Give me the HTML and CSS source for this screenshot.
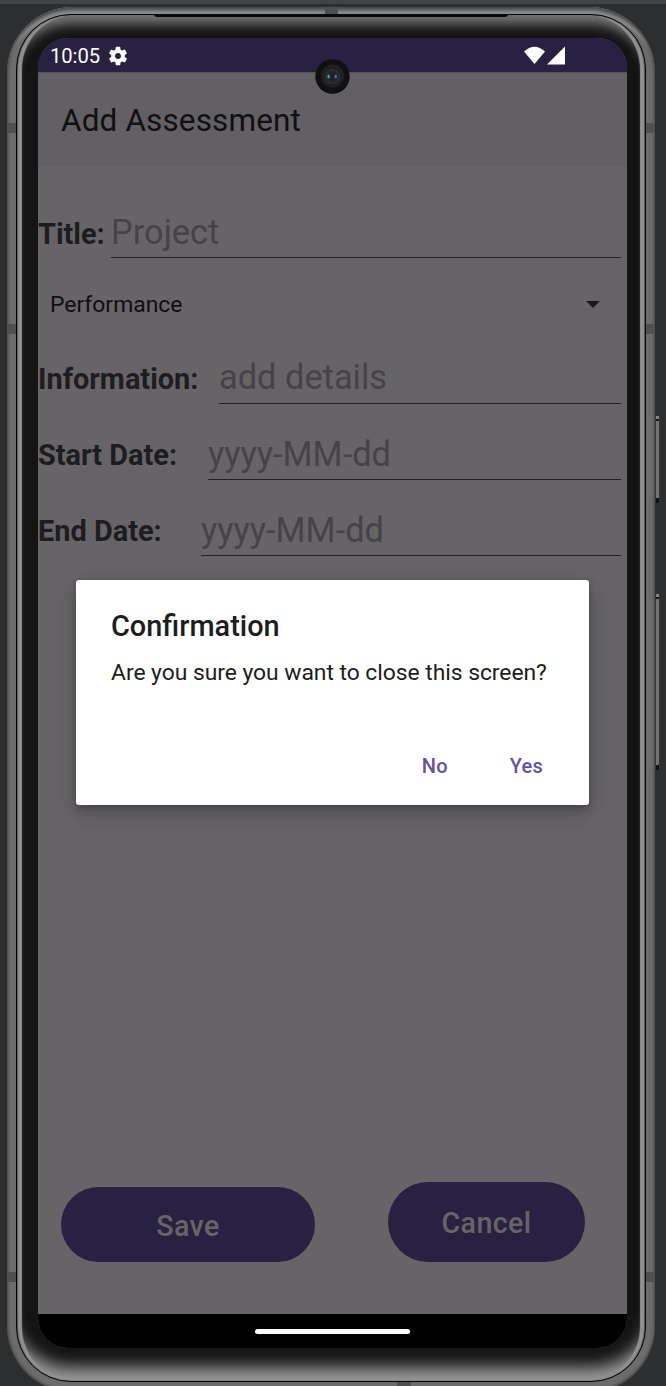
FILE: index.html
```html
<!DOCTYPE html>
<html lang="en">
<head>
<meta charset="utf-8">
<title>Add Assessment</title>
<link rel="stylesheet" href="styles.css">
</head>
<body>
<div class="stage">
  <div class="toolbar-edge"></div>
  <div class="phone">
    <i class="band band-top"></i>
    <i class="band band-l1"></i><i class="band band-l2"></i><i class="band band-l3"></i>
    <i class="band band-r1"></i><i class="band band-r2"></i><i class="band band-r3"></i>
    <i class="band band-bottom"></i>
    <i class="key key-power"></i>
    <i class="key key-volume"></i>
    <div class="rim">
      <i class="speaker"></i>
      <div class="screen">
        <header class="status">
          <span class="clock">10:05</span>
          <svg class="gear" viewBox="0 0 24 24"><path fill="#fff" d="M19.4 13c.04-.3.06-.65.06-1s-.02-.7-.07-1l2.1-1.65c.2-.15.25-.42.13-.64l-2-3.46c-.12-.22-.38-.3-.6-.22l-2.5 1a7.300 7.300 0 0 0-1.700-.98l-.38-2.650A.49.490 0 0 0 14 2h-4a.49.490 0 0 0-.49.420l-.38 2.650c-.6.240-1.170.570-1.690.980l-2.490-1a.5.500 0 0 0-.61.220l-2 3.460c-.13.220-.07.490.12.640L4.600 11c-.05.300-.08.650-.08 1s.03.700.07 1l-2.110 1.650a.5.500 0 0 0-.12.640l2 3.460c.12.220.38.300.6.220l2.500-1c.52.400 1.080.730 1.690.980l.38 2.650c.04.240.24.400.48.400h4c.25 0 .46-.18.490-.42l.38-2.650c.61-.25 1.170-.58 1.690-.98l2.500 1c.23.090.49 0 .61-.22l2-3.460a.5.500 0 0 0-.12-.64zM12 15.200a3.200 3.200 0 1 1 0-6.400 3.200 3.200 0 0 1 0 6.400z"/></svg>
          <svg class="signal" viewBox="0 0 42 18"><path fill="#fff" d="M0 5Q10.500-4.600 21 5L10.500 17.500z"/><path fill="#fff" d="M41 0v18H23z"/></svg>
        </header>
        <div class="appbar"><h1>Add Assessment</h1></div>
        <main class="content">
          <div class="row row-title"><span class="label">Title:</span><span class="field field-title">Project</span></div>
          <div class="spinner"><span>Performance</span><svg class="caret" viewBox="0 0 14 7"><path fill="#19191b" d="M0 0h14L7 7z"/></svg></div>
          <div class="row"><span class="label">Information:</span><span class="field field-info">add details</span></div>
          <div class="row"><span class="label">Start Date:</span><span class="field field-start">yyyy-MM-dd</span></div>
          <div class="row"><span class="label">End Date:</span><span class="field field-end">yyyy-MM-dd</span></div>
          <div class="actions"><button class="btn save">Save</button><button class="btn cancel">Cancel</button></div>
        </main>
        <footer class="nav"><i class="pill"></i></footer>
        <div class="camera"><svg viewBox="0 0 35 35"><circle cx="17.500" cy="17.500" r="17.200" fill="#101010"/><circle cx="17.500" cy="17" r="11.500" fill="#202020"/><circle cx="17.500" cy="17.500" r="7.800" fill="#2b2c2e"/><ellipse cx="17.500" cy="17.500" rx="5.500" ry="5" fill="#1d2228"/><ellipse cx="13.600" cy="17.500" rx="1.200" ry="2" fill="#5d9797"/><ellipse cx="20.800" cy="17.500" rx="1.200" ry="2" fill="#5868a8"/></svg></div>
        <section class="dialog">
          <h2>Confirmation</h2>
          <p>Are you sure you want to close this screen?</p>
          <div class="choices"><span class="no">No</span><span class="yes">Yes</span></div>
        </section>
      </div>
    </div>
  </div>
</div>
</body>
</html>
```
FILE: styles.css
```css
* { box-sizing: border-box; }
body { margin: 0; background: #2d2e30; font-family: Roboto, "Liberation Sans", sans-serif; }
.stage { width: 666px; height: 1386px; overflow: hidden; }
.toolbar-edge { height: 4px; background: #414345; }
.phone {
  position: relative;
  width: 648px; height: 1385px;
  margin: 3px 0 0 7px;
  padding: 7px 9px 6px;
  border-radius: 66px;
  background: #6c6c6c;
  box-shadow: inset 0 0 3px 1px #434343, inset 0 8px 4px -4px #555, inset 0 12px 3px -4px #999;
}
.rim {
  position: relative;
  height: 1368px;
  padding: 23px 18px 0 21px;
  border: 1px solid #070707;
  border-radius: 55px;
  background: #141414;
  box-shadow: inset 1px 0 1px #555, inset -1px 0 1px #555, inset 5px 0 1px #929292, inset -5px 0 1px #929292,
    inset 0 15px 12px -6px #777, inset 0 -22px 16px -8px #999;
}
.speaker { position: absolute; left: 137px; top: -1px; width: 354px; height: 3px; background: #080808; border-radius: 0 0 4px 4px; }
.band { position: absolute; background: #505050; width: 10px; height: 10px; }
.band-top { left: 318px; top: 0; width: 13px; height: 8px; }
.band-bottom { left: 390px; bottom: 6px; width: 14px; height: 5px; }
.band-l1, .band-l2, .band-l3 { left: 0; }
.band-r1, .band-r2, .band-r3 { right: 0; }
.band-l1, .band-r1 { top: 116px; }
.band-l2, .band-r2 { top: 317px; }
.band-l3, .band-r3 { top: 1265px; }
.key { position: absolute; left: 648px; width: 5px; background: linear-gradient(#858585 0 3px, #151515 3px 5px, #737373 5px calc(100% - 5px), #101010 calc(100% - 5px)); border: solid #333; border-width: 0 1px; }
.key-power { top: 409px; height: 87px; }
.key-volume { top: 587px; height: 176px; }
.screen {
  position: relative;
  display: flex; flex-direction: column;
  width: 589px; height: 1310px;
  border-radius: 30px;
  overflow: hidden;
  background: #676468;
}
.status { display: flex; align-items: center; height: 34px; padding: 1px 61px 0 12px; background: #282141; color: #fff; }
.clock { font-size: 20.200px; line-height: 34px; letter-spacing: -.05px; }
.gear { width: 22px; height: 22px; margin-left: 7px; }
.signal { width: 42px; height: 19px; margin-left: auto; }
.appbar { display: flex; align-items: center; height: 92px; padding: 3px 23px 0; background: #625f65; border-top: 1px solid #55525b; box-shadow: 0 1px 1px #5e5b5e; }
h1 { margin: 0; font-size: 31.500px; font-weight: 400; color: #101011; letter-spacing: .13px; }
.content { display: flex; flex-direction: column; flex: 1; padding-top: 18px; }
.row { display: flex; justify-content: space-between; height: 76.300px; padding-right: 6px; color: #1d1d20; }
.label { align-self: flex-end; margin-bottom: 8px; font-size: 28.900px; line-height: 34px; font-weight: 700; white-space: nowrap; }
.row-title .label { margin-bottom: 7px; }
.field { display: flex; align-items: flex-end; border-bottom: 1.500px solid #222224; padding-bottom: 5px; font-size: 34.400px; line-height: 40px; color: #454346; white-space: nowrap; }
.field-title { width: 510px; }
.field-info { width: 402px; padding-bottom: 6px; }
.field-start { width: 413px; }
.field-end { width: 420px; }
.spinner { display: flex; align-items: center; justify-content: space-between; height: 69px; padding: 24px 27px 0 12px; font-size: 22.900px; color: #0e0e0f; }
.caret { width: 14px; height: 7px; }
.actions { display: flex; align-items: flex-end; justify-content: space-between; margin-top: auto; padding: 0 42px 52px 23px; }
.btn { border: 0; padding: 0; border-radius: 41px; background: #282141; color: #676468; font: 500 28.600px Roboto, sans-serif; letter-spacing: .4px; }
.save { width: 254px; height: 75px; padding-top: 3px; }
.cancel { width: 197px; height: 80px; padding-top: 2px; }
.nav { display: flex; align-items: center; justify-content: center; height: 34px; background: #000; }
.pill { width: 155px; height: 5px; border-radius: 3px; background: #fff; }
.camera { position: absolute; left: 277px; top: 21px; width: 35px; height: 35px; }
.camera svg { display: block; }
.dialog { position: absolute; left: 38px; top: 542px; width: 513px; height: 225px; padding: 29px 35px; border-radius: 3px; background: #fff; color: #1d1d20; box-shadow: 0 8px 18px rgba(30,30,30,.35), 0 2px 5px rgba(30,30,30,.25); }
h2 { margin: 0; font-size: 28.900px; line-height: 34px; font-weight: 500; }
p { margin: 15px 0 0; font-size: 22.900px; line-height: 29px; white-space: nowrap; letter-spacing: -.05px; }
.choices { display: flex; justify-content: flex-end; gap: 62px; margin-top: 66px; padding-right: 11px; font-size: 20px; line-height: 26px; font-weight: 500; color: #6550a4; letter-spacing: .2px; }
```
